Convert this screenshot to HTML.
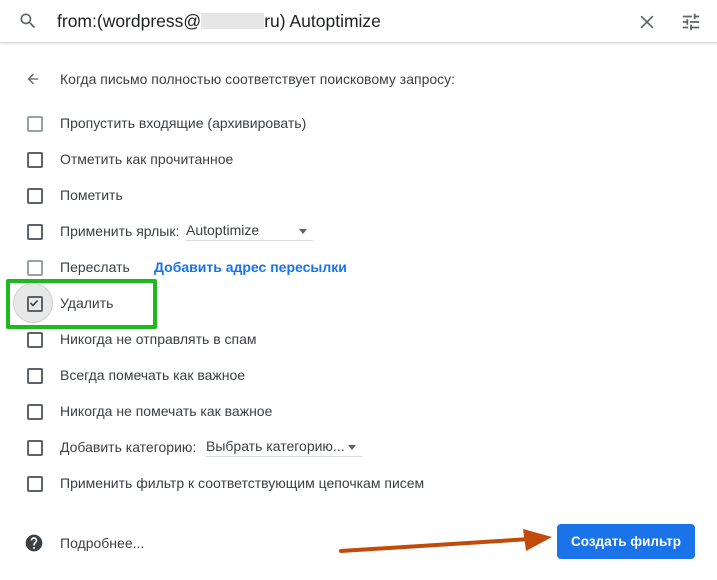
<!DOCTYPE html>
<html><head><meta charset="utf-8"><style>
body{margin:0;width:717px;height:580px;background:#fff;font-family:"Liberation Sans",sans-serif;color:#202124;position:relative;overflow:hidden}
.abs{position:absolute}
.bar{left:0;top:0;width:717px;height:42px;border-bottom:1px solid #dadce0;box-shadow:0 1px 2px rgba(0,0,0,.12)}
.q{left:57px;top:11px;font-size:17.5px;color:#202124}
.cb{position:absolute;left:27px;width:12px;height:12px;border:2px solid #5f6368;border-radius:2px}
.cb.l{border-color:#9aa0a6}
.t{position:absolute;left:60px;font-size:14px;color:#3c4043}
.dd{position:absolute;border-bottom:1px solid #dadce0;font-size:14px;color:#3c4043;height:18px}
.dd:after{content:"";position:absolute;right:6px;top:7px;border:4px solid transparent;border-top:5px solid #5f6368}
</style></head><body>
<div class="abs bar"></div>
<svg class="abs" style="left:18px;top:11px" width="20" height="20" viewBox="0 0 24 24"><path d="M15.5 14h-.8l-.3-.3A6.5 6.5 0 1 0 9.5 16c1.6 0 3.1-.6 4.2-1.6l.3.3v.8l5 5 1.5-1.5-5-5zm-6 0C7 14 5 12 5 9.5S7 5 9.5 5 14 7 14 9.5 12 14 9.5 14z" fill="#5f6368"/></svg>
<div class="abs q">from:(wordpress@<span style="display:inline-block;width:63px;height:16px;background:#e6e6e6;vertical-align:-2px"></span>ru) Autoptimize</div>
<svg class="abs" style="left:637px;top:12px" width="20" height="20" viewBox="0 0 24 24"><path d="M5 5l14 14M19 5L5 19" stroke="#5f6368" stroke-width="2"/></svg>
<svg class="abs" style="left:680px;top:11px" width="22" height="22" viewBox="0 0 24 24"><path d="M3 17v2h6v-2H3zM3 5v2h10V5H3zm10 16v-2h8v-2h-8v-2h-2v6h2zM7 9v2H3v2h4v2h2V9H7zm14 4v-2H11v2h10zm-6-4h2V7h4V5h-4V3h-2v6z" fill="#5f6368"/></svg>
<svg class="abs" style="left:25px;top:71px" width="16" height="16" viewBox="0 0 24 24"><path d="M20 11H7.8l5.6-5.6L12 4l-8 8 8 8 1.4-1.4L7.8 13H20v-2z" fill="#5f6368"/></svg>
<div class="t" style="top:71px">Когда письмо полностью соответствует поисковому запросу:</div>

<div class="cb l" style="top:116px"></div><div class="t" style="top:115px">Пропустить входящие (архивировать)</div>
<div class="cb" style="top:152px"></div><div class="t" style="top:151px">Отметить как прочитанное</div>
<div class="cb" style="top:188px"></div><div class="t" style="top:187px">Пометить</div>
<div class="cb" style="top:224px"></div><div class="t" style="top:223px">Применить ярлык:</div>
<div class="dd" style="left:186px;top:222px;width:127px">Autoptimize</div>
<div class="cb l" style="top:260px"></div><div class="t" style="top:259px">Переслать</div>
<div class="t" style="top:259px;left:154px;color:#1a73e8;font-weight:bold">Добавить адрес пересылки</div>
<div class="abs" style="left:13px;top:283px;width:40px;height:40px;border-radius:50%;background:#e8e8e8;border:1px solid #d0d0d0;box-sizing:border-box"></div>
<div class="cb" style="top:296px"></div>
<svg class="abs" style="left:28px;top:297px" width="12" height="12" viewBox="0 0 12 12"><path d="M2.5 6l2.5 2.5 4.5-5" stroke="#3c4043" stroke-width="1.6" fill="none"/></svg>
<div class="t" style="top:295px">Удалить</div>
<div class="abs" style="left:6px;top:279px;width:143px;height:42px;border:4px solid #1fb81f;border-radius:2px"></div>
<div class="cb" style="top:332px"></div><div class="t" style="top:331px">Никогда не отправлять в спам</div>
<div class="cb" style="top:368px"></div><div class="t" style="top:367px">Всегда помечать как важное</div>
<div class="cb" style="top:404px"></div><div class="t" style="top:403px">Никогда не помечать как важное</div>
<div class="cb" style="top:440px"></div><div class="t" style="top:439px">Добавить категорию:</div>
<div class="dd" style="left:206px;top:438px;width:156px">Выбрать категорию...</div>
<div class="cb" style="top:476px"></div><div class="t" style="top:475px">Применить фильтр к соответствующим цепочкам писем</div>

<svg class="abs" style="left:24px;top:533px" width="20" height="20" viewBox="0 0 24 24"><path d="M12 2a10 10 0 1 0 0 20 10 10 0 0 0 0-20zm1 17h-2v-2h2v2zm2.1-7.8l-.9.9C13.5 12.9 13 13.5 13 15h-2v-.5c0-1.1.5-2.1 1.2-2.8l1.2-1.3c.4-.3.6-.8.6-1.4a2 2 0 0 0-4 0H8a4 4 0 0 1 8 0c0 .9-.4 1.7-.9 2.2z" fill="#3c4043"/></svg>
<div class="t" style="top:535px">Подробнее...</div>
<svg class="abs" style="left:330px;top:520px" width="230" height="40"><path d="M11 31L200 19" stroke="#c24a0a" stroke-width="4" stroke-linecap="round"/><path d="M193 9L222 17 196 31z" fill="#c24a0a"/></svg>
<div class="abs" style="left:557px;top:524px;width:138px;height:35px;background:#1a73e8;border-radius:4px;color:#fff;font-weight:bold;font-size:13.5px;text-align:center;line-height:35px">Создать фильтр</div>
</body></html>
